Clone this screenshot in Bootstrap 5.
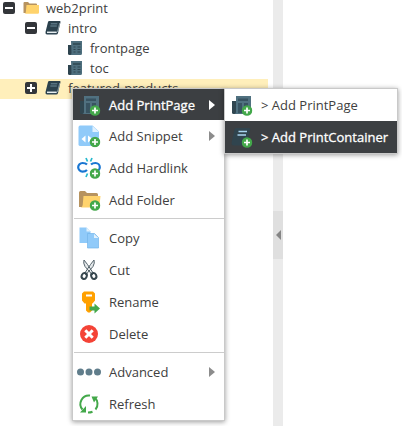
<!DOCTYPE html>
<html lang="en">
<head>
<meta charset="utf-8">
<meta name="viewport" content="width=device-width, initial-scale=1">
<title>Documents</title>
<link href="https://cdn.jsdelivr.net/npm/bootstrap@5.3.0/dist/css/bootstrap.min.css" rel="stylesheet">
<style>
body{font:13px/20px "Open Sans",sans-serif;color:#404040;height:426px;overflow:hidden}
.workspace{height:426px}
.tree-panel{width:273px;margin-top:-1px}
.tree-row{height:20px;padding-bottom:2px}
.tree-row svg{flex:none}
.tree-row .toggle{width:12px;height:12px;margin-left:3px;margin-right:8px}
.tree-row .kind{width:16px;height:16px;margin-right:7px}
.level-1{padding-left:22px}
.level-2{padding-left:67px}
.tree-row.selected{background:#ffefbb;width:268px}
.splitter{width:10px;height:426px;background:#ebebeb}
.collapse-handle{height:48px;margin-top:44px;background:#dfdfdf}
.popup{background:#fff;border:1px solid #c9c9c9;box-shadow:0 1px 5px rgba(0,0,0,.4);position:absolute}
.main-popup{left:72px;top:88px;width:153px;height:333px}
.sub-popup{left:224px;top:88px;width:174px;height:66px}
.entry{height:32px;padding-left:4px;padding-right:9px;white-space:nowrap}
.sub-popup .entry{padding-right:0}
.main-popup .entry:first-child{height:31px}
.entry svg.glyph{width:24px;height:24px;flex:none;margin-right:8px;overflow:visible}
.entry .arrow{width:6px;height:10px;fill:#8c8c8c}
.entry.current{background:#3c3f42;color:#fff;-webkit-text-stroke:.3px #fff}
.entry.current .arrow{fill:#fff}
.rule{height:1px;margin:2px 0 3px 1px;background:#ccc}
</style>
<script src="https://cdn.jsdelivr.net/npm/bootstrap@5.3.0/dist/js/bootstrap.bundle.min.js"></script>
</head>
<body class="bg-white position-relative">
<svg width="0" height="0" class="position-absolute">
<defs>
<symbol id="minus" viewBox="0 0 12 12"><rect width="12" height="12" rx="2" fill="#33363a"/><path d="M2 6h8" stroke="#fff" stroke-width="2"/></symbol>
<symbol id="plus" viewBox="0 0 12 12"><rect width="12" height="12" rx="2" fill="#33363a"/><path d="M2 6h8M6 2v8" stroke="#fff" stroke-width="2"/></symbol>
<symbol id="folder" viewBox="0 0 16 16"><path d="M.5 3.200q0-1.200 1-1.200h3.500l1.500 1.500H13q1 0 1 1V13H.5z" fill="#b7935f"/><path d="M3.500 5H16v7.500q0 1.200-1.200 1.200H1.500q1.200-.2 1.300-1.500z" fill="#ffd36c"/></symbol>
<symbol id="book" viewBox="0 0 16 16"><path d="M4.200 1h10.500q1 0 .8 1L13 13q-.3 1.500-1.800 1.500H2Q.2 14.500.5 12L3 2q.3-1 1.200-1z" fill="#2b414d"/><path d="M2 12.300h9.700" stroke="#e6edf0" stroke-width="1.500"/><path d="M14.800 3l-2.300 9" stroke="#9fb1b9" stroke-width=".8"/><path d="M5.800 3.800h6.500M5.300 6h6.500" stroke="#6d8b99"/></symbol>
<symbol id="paper" viewBox="0 0 16 16"><path d="M1 5h4v10H2.500Q1 15 1 13.500z" fill="#2d434e"/><path d="M4 1h11v12.500Q15 15 13.500 15H3.300Q4.500 14.500 4.500 13z" fill="#4e6f7e"/><path d="M6 4h7.500" stroke="#2e4651" stroke-width="1.500"/><path d="M6.500 7h2M10.500 7h3M6.500 9.500h2M10.500 9.500h3M6.500 12h2M10.500 12h3" stroke="#2e4651"/></symbol>
<symbol id="badge-add" viewBox="0 0 11 11"><circle cx="5.500" cy="5.500" r="5.300" fill="#43a84a"/><path d="M5.500 2.500v6M2.500 5.500h6" stroke="#fff" stroke-width="1.700"/></symbol>
<symbol id="news" viewBox="0 0 24 24"><path d="M3 8h4v13H4.500Q3 21 3 19.500z" fill="#304650"/><path d="M7 3h15v18H5.500Q7 20.500 7 19z" fill="#507180"/><path d="M9 5.500h10v2.500H9zM9 10h4v10H9zM15 10h4v10h-4z" fill="#385361"/></symbol>
</defs>
</svg>

<div class="workspace d-flex">
<div class="tree-panel">
<div class="tree-row d-flex align-items-center"><svg class="toggle"><use href="#minus"/></svg><svg class="kind"><use href="#folder"/></svg><span>web2print</span></div>
<div class="tree-row level-1 d-flex align-items-center"><svg class="toggle"><use href="#minus"/></svg><svg class="kind"><use href="#book"/></svg><span>intro</span></div>
<div class="tree-row level-2 d-flex align-items-center"><svg class="kind"><use href="#paper"/></svg><span>frontpage</span></div>
<div class="tree-row level-2 d-flex align-items-center"><svg class="kind"><use href="#paper"/></svg><span>toc</span></div>
<div class="tree-row level-1 selected d-flex align-items-center"><svg class="toggle"><use href="#plus"/></svg><svg class="kind"><use href="#book"/></svg><span>featured-products</span></div>
</div>
<div class="splitter d-flex flex-column justify-content-center">
<div class="collapse-handle d-flex align-items-center justify-content-center"><svg width="6" height="10"><path d="M6 0v10L1 5z" fill="#858585"/></svg></div>
</div>
</div>

<div class="popup main-popup">
<div class="entry current d-flex align-items-center"><svg class="glyph" viewBox="0 0 24 24"><use href="#news" width="24" height="24"/><use href="#badge-add" x="12.500" y="12" width="11" height="11"/></svg><span>Add PrintPage</span><svg class="arrow ms-auto"><path d="M0 0v10l6-5z"/></svg></div>
<div class="entry d-flex align-items-center"><svg class="glyph" viewBox="0 0 24 24"><path d="M3 1.500h12.500L22 7.500v13q0 1.500-1.500 1.500h-17Q1.500 22 1.500 20.500v-17Q1.500 1.500 3 1.500z" fill="#90caf9"/><path d="M15.500 2V8h6.500z" fill="#e1f1fd"/><path d="M8.500 11.500v7L4.500 15zM11 11.500v7l4.500-3.500z" fill="#fff"/><use href="#badge-add" x="12.500" y="12.500" width="11" height="11"/></svg><span>Add Snippet</span><svg class="arrow ms-auto"><path d="M0 0v10l6-5z"/></svg></div>
<div class="entry d-flex align-items-center"><svg class="glyph" viewBox="0 0 24 24"><path d="M10 8.500Q8.500 7 5.500 7a4.300 4.300 0 0 0 0 8.600q3 0 4.500-1.600M14 8.500q1.500-1.500 4.500-1.500a4.300 4.300 0 0 1 0 8.600" fill="none" stroke="#1976d2" stroke-width="2.200"/><path d="M9 2l1.500 3.500M15 2l-1.500 3.500M9 21l1.500-3.500" stroke="#26b9ce" stroke-width="1.700"/><use href="#badge-add" x="12.500" y="12" width="11" height="11"/></svg><span>Add Hardlink</span></div>
<div class="entry d-flex align-items-center"><svg class="glyph" viewBox="0 0 24 24"><path d="M2 4.500Q2 3 3.500 3H8l2 2h9.500Q21 5 21 6.500V19H2z" fill="#b7935f"/><path d="M6.500 8H23.500l-1 9.500q-.2 2-2 2H3.500Q5.500 19 5.700 17z" fill="#ffd36c"/><use href="#badge-add" x="12.500" y="12" width="11" height="11"/></svg><span>Add Folder</span></div>
<div class="rule"></div>
<div class="entry d-flex align-items-center"><svg class="glyph" viewBox="0 0 24 24"><path d="M2.500 1.500h7l4 4V17h-11z" fill="#90caf9"/><path d="M9.500 1.500v4h4z" fill="#e1f1fd"/><path d="M10.500 7.500h7l4 4V22h-11z" fill="#90caf9" stroke="#74b5ea" stroke-width=".7"/><path d="M17 8v4h4.500z" fill="#e1f1fd"/></svg><span>Copy</span></div>
<div class="entry d-flex align-items-center"><svg class="glyph" viewBox="0 0 24 24"><path d="M7 2Q6 5 8 8.500l7 8 1.500-1-6-9zM17 2q1 3-1 6.500l-7 8-1.500-1 6-9z" fill="#e5e9eb" stroke="#53626a"/><ellipse cx="7.200" cy="18" rx="2.500" ry="3" fill="none" stroke="#37474f" stroke-width="2" transform="rotate(25 7.200 18)"/><ellipse cx="16.800" cy="18" rx="2.500" ry="3" fill="none" stroke="#37474f" stroke-width="2" transform="rotate(-25 16.800 18)"/></svg><span>Cut</span></div>
<div class="entry d-flex align-items-center"><svg class="glyph" viewBox="0 0 24 24"><path fill-rule="evenodd" d="M7 1.500h9l2 2v7l-2.500 3H15v7l-2 2h-2l-2-2v-7H7.500l-2.500-3v-7zM9 4.500v2h6v-2z" fill="#ffa000"/><path d="M12.500 16.500h5v-3l5.500 5-5.500 5v-3h-5z" fill="#43a84a"/></svg><span>Rename</span></div>
<div class="entry d-flex align-items-center"><svg class="glyph" viewBox="0 0 24 24"><circle cx="12" cy="12" r="9" fill="#f44336"/><path d="M8.300 8.300l7.400 7.400M15.700 8.300l-7.400 7.400" stroke="#fff" stroke-width="3"/></svg><span>Delete</span></div>
<div class="rule"></div>
<div class="entry d-flex align-items-center"><svg class="glyph" viewBox="0 0 24 24"><g fill="#607d8b"><circle cx="3.500" cy="12" r="3.500"/><circle cx="12" cy="12" r="3.500"/><circle cx="20.500" cy="12" r="3.500"/></g></svg><span>Advanced</span><svg class="arrow ms-auto"><path d="M0 0v10l6-5z"/></svg></div>
<div class="entry d-flex align-items-center"><svg class="glyph" viewBox="0 0 24 24"><path d="M13 3.500A8.500 8.500 0 0 0 5.500 17.500M17.500 5.500A8.500 8.500 0 0 1 18.500 17.500M11 20.500q2.500 0 4.500-.8" fill="none" stroke="#43a84a" stroke-width="2"/><path d="M14.500 4.500H21l-4 6zM3 20.500h6V14z" fill="#43a84a"/></svg><span>Refresh</span></div>
</div>

<div class="popup sub-popup">
<div class="entry d-flex align-items-center"><svg class="glyph" viewBox="0 0 24 24"><use href="#news" width="24" height="24"/><use href="#badge-add" x="12.500" y="12" width="11" height="11"/></svg><span>&gt; Add PrintPage</span></div>
<div class="entry current d-flex align-items-center"><svg class="glyph" viewBox="0 0 24 24"><path d="M7 3h13q1.500 0 1.200 1.500L18 18q-.5 2.500-3 2.500H5q-3 0-2.300-3.500L5.500 4.500Q6 3 7 3z" fill="#30444e"/><path d="M9.500 6.500H18M8.500 10H17" stroke="#a9d4ef" stroke-width="1.500"/><use href="#badge-add" x="12.500" y="12" width="11" height="11"/></svg><span>&gt; Add PrintContainer</span></div>
</div>
</body>
</html>
